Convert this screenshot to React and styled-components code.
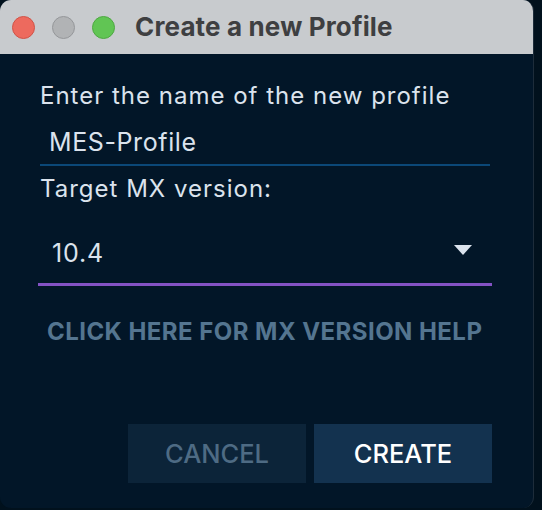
import styled, { createGlobalStyle } from "styled-components";

const GlobalStyle = createGlobalStyle`
  html, body {
    margin: 0;
    padding: 0;
    background: #01111d;
    font-family: Inter, "Noto Sans", sans-serif;
  }
`;

const Window = styled.div`
  width: 533px;
  height: 508px;
  background: #021628;
  border-radius: 11px;
  border-right: 1px solid #1d2c3a;
  overflow: hidden;
  display: flex;
  flex-direction: column;
`;

const TitleBar = styled.div`
  height: 54px;
  flex-shrink: 0;
  background: #c8cbce;
  display: flex;
  align-items: center;
  padding-left: 12px;
  gap: 17px;
`;

const Light = styled.span`
  width: 23px;
  height: 23px;
  border-radius: 50%;
  background: ${({ $color }) => $color};
  border: 0.5px solid ${({ $edge }) => $edge};
  box-sizing: border-box;
`;

const Title = styled.h1`
  margin: 0 0 0 3px;
  font-size: 26px;
  font-weight: 700;
  letter-spacing: 0.15px;
  color: #3e3f41;
  line-height: 30px;
`;

const Content = styled.div`
  padding: 28px 43px 0 40px;
  display: flex;
  flex-direction: column;
`;

const Label = styled.div`
  font-size: 24px;
  line-height: 28px;
  letter-spacing: 1px;
  color: #dbe3ed;
  margin-top: ${({ $top }) => $top || 0}px;
`;

const TextInput = styled.input`
  margin-top: 18px;
  background: transparent;
  border: none;
  border-bottom: 2px solid #0b4878;
  outline: none;
  color: #dbe3ed;
  font-family: inherit;
  font-size: 25px;
  letter-spacing: 0.6px;
  line-height: 30px;
  height: 38px;
  padding: 0 9px 8px;
  box-sizing: border-box;
  width: 100%;
`;

const Select = styled.div`
  margin: 35px -2px 0;
  display: flex;
  align-items: center;
  justify-content: space-between;
  padding: 0 20px 15px 14px;
  border-bottom: 3px solid #8452c4;
  color: #dbe3ed;
  font-size: 25px;
  letter-spacing: 0.8px;
  line-height: 30px;
`;

const Arrow = styled.svg`
  width: 18px;
  height: 10px;
  margin-top: -6px;
`;

const HelpLink = styled.button`
  margin-top: 32px;
  align-self: flex-start;
  background: none;
  border: none;
  padding: 0 0 0 7px;
  font-family: inherit;
  font-size: 24px;
  line-height: 28px;
  letter-spacing: 0.45px;
  font-weight: 700;
  color: #547590;
  text-transform: uppercase;
  cursor: pointer;
`;

const Footer = styled.div`
  margin: 78px -2px 0 0;
  display: flex;
  justify-content: flex-end;
  gap: 8px;
`;

const Button = styled.button`
  width: 178px;
  height: 59px;
  border: none;
  background: ${({ $primary }) => ($primary ? "#13324f" : "#0c2439")};
  color: ${({ $primary }) => ($primary ? "#ffffff" : "#4e6b84")};
  font-family: inherit;
  font-size: 25.5px;
  font-weight: 500;
  text-transform: uppercase;
  cursor: pointer;
`;

export default function App() {
  return (
    <>
      <GlobalStyle />
      <Window>
        <TitleBar>
          <Light $color="#ed6a5e" $edge="#d05347" />
          <Light $color="#b1b3b5" $edge="#95979a" />
          <Light $color="#61c554" $edge="#4ea842" />
          <Title>Create a new Profile</Title>
        </TitleBar>
        <Content>
          <Label>Enter the name of the new profile</Label>
          <TextInput defaultValue="MES-Profile" />
          <Label $top={9}>Target MX version:</Label>
          <Select>
            <span>10.4</span>
            <Arrow viewBox="0 0 18 10">
              <path d="M0 0 H18 L9 10 Z" fill="#dbe3ed" />
            </Arrow>
          </Select>
          <HelpLink>Click here for MX version help</HelpLink>
          <Footer>
            <Button>Cancel</Button>
            <Button $primary>Create</Button>
          </Footer>
        </Content>
      </Window>
    </>
  );
}
